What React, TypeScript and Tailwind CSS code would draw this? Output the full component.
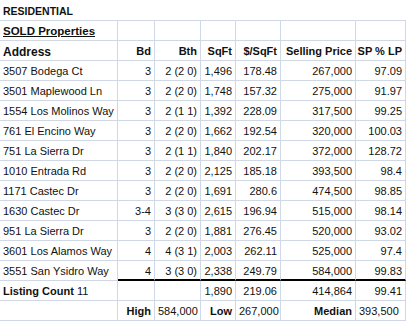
import React from "react";

type Row = [string, string, string, string, string, string, string];

const rows: Row[] = [
  ["3507 Bodega Ct", "3", "2 (2 0)", "1,496", "178.48", "267,000", "97.09"],
  ["3501 Maplewood Ln", "3", "2 (2 0)", "1,748", "157.32", "275,000", "91.97"],
  ["1554 Los Molinos Way", "3", "2 (1 1)", "1,392", "228.09", "317,500", "99.25"],
  ["761 El Encino Way", "3", "2 (2 0)", "1,662", "192.54", "320,000", "100.03"],
  ["751 La Sierra Dr", "3", "2 (1 1)", "1,840", "202.17", "372,000", "128.72"],
  ["1010 Entrada Rd", "3", "2 (2 0)", "2,125", "185.18", "393,500", "98.4"],
  ["1171 Castec Dr", "3", "2 (2 0)", "1,691", "280.6", "474,500", "98.85"],
  ["1630 Castec Dr", "3-4", "3 (3 0)", "2,615", "196.94", "515,000", "98.14"],
  ["951 La Sierra Dr", "3", "2 (2 0)", "1,881", "276.45", "520,000", "93.02"],
  ["3601 Los Alamos Way", "4", "4 (3 1)", "2,003", "262.11", "525,000", "97.4"],
  ["3551 San Ysidro Way", "4", "3 (3 0)", "2,338", "249.79", "584,000", "99.83"],
];

const cell = "h-[20px] border-r border-b border-[#d0d7e5] flex items-center pt-[2px] px-[3px] whitespace-nowrap overflow-visible";

export default function App() {
  return (
    <div
      className="w-[406px] h-[324px] bg-white text-[#111] text-[11px] overflow-hidden"
      style={{ fontFamily: '"Liberation Sans", Arial, sans-serif' }}
    >
      <div className="grid grid-cols-[118px_37px_46px_35px_45px_75px_50px]">
        {/* Row 0 */}
        <div className="col-span-7 h-[21px] border-b border-[#d0d7e5] flex items-center pt-[3px] px-[3px] font-bold text-[10.5px]">
          RESIDENTIAL
        </div>
        {/* Row 1 */}
        <div className={`${cell} font-bold underline text-[11.5px]`}>SOLD Properties</div>
        <div className={cell}></div>
        <div className={cell}></div>
        <div className={cell}></div>
        <div className={cell}></div>
        <div className={cell}></div>
        <div className={cell}></div>
        {/* Header */}
        <div className={`${cell} font-bold text-[12px]`}>Address</div>
        <div className={`${cell} font-bold justify-end`}>Bd</div>
        <div className={`${cell} font-bold justify-end`}>Bth</div>
        <div className={`${cell} font-bold justify-end`}>SqFt</div>
        <div className={`${cell} font-bold justify-end`}>$/SqFt</div>
        <div className={`${cell} font-bold justify-end`}>Selling Price</div>
        <div className={`${cell} font-bold justify-end`}>SP % LP</div>
        {/* Data */}
        {rows.map((r, i) => {
          const last = i === rows.length - 1;
          const thick = last ? " border-b-2 border-b-black" : "";
          return (
            <React.Fragment key={i}>
              <div className={cell}>{r[0]}</div>
              <div className={`${cell} justify-end${thick}`}>{r[1]}</div>
              <div className={`${cell} justify-end${thick}`}>{r[2]}</div>
              <div className={`${cell} justify-end${thick}`}>{r[3]}</div>
              <div className={`${cell} justify-end${thick}`}>{r[4]}</div>
              <div className={`${cell} justify-end${thick}`}>{r[5]}</div>
              <div className={`${cell} justify-end${thick}`}>{r[6]}</div>
            </React.Fragment>
          );
        })}
        {/* Listing count */}
        <div className={cell}>
          <span className="font-bold">Listing Count</span>&nbsp;11
        </div>
        <div className={cell}></div>
        <div className={cell}></div>
        <div className={`${cell} justify-end`}>1,890</div>
        <div className={`${cell} justify-end`}>219.06</div>
        <div className={`${cell} justify-end`}>414,864</div>
        <div className={`${cell} justify-end`}>99.41</div>
        {/* High / Low / Median */}
        <div className={cell}></div>
        <div className={`${cell} justify-end font-bold`}>High</div>
        <div className={`${cell} px-[2px]`}>584,000</div>
        <div className={`${cell} justify-end font-bold`}>Low</div>
        <div className={`${cell} px-[2px]`}>267,000</div>
        <div className={`${cell} justify-end font-bold`}>Median</div>
        <div className={`${cell} px-[2px]`}>393,500</div>
      </div>
    </div>
  );
}
